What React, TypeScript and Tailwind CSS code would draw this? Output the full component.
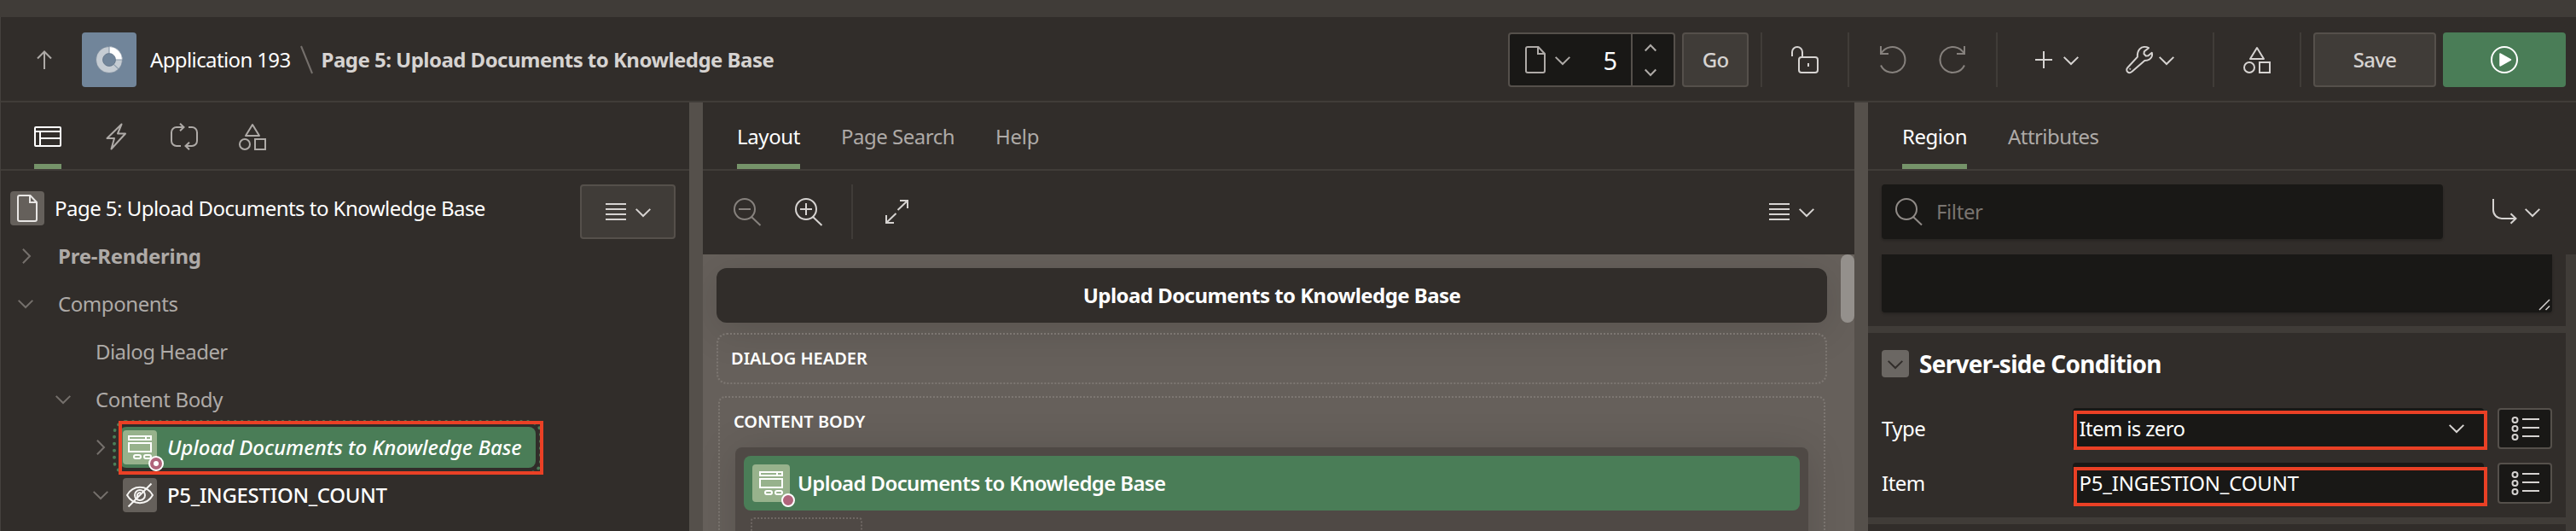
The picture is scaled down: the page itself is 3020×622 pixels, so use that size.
import React from 'react';

type IconProps = { className?: string };

const Svg = ({ w, h, sw = 2, className = '', children }: { w: number; h: number; sw?: number; className?: string; children: React.ReactNode }) => (
  <svg width={w} height={h} viewBox={`0 0 ${w} ${h}`} fill="none" stroke="currentColor" strokeWidth={sw} className={`shrink-0 overflow-visible ${className}`}>
    {children}
  </svg>
);

const ChevronDown = ({ className }: IconProps) => (
  <Svg w={18} h={10} className={className}><path d="M.7.9 9 9 17.300.9" /></Svg>
);
const ChevronRight = ({ className }: IconProps) => (
  <Svg w={10} h={18} className={className}><path d="M.9.7 9 9 .9 17.300" /></Svg>
);
const Doc = ({ className }: IconProps) => (
  <Svg w={24} h={32} className={className}>
    <path d="M3 1h12.500L23 9v20a2 2 0 0 1-2 2H3a2 2 0 0 1-2-2V3a2 2 0 0 1 2-2z" />
    <path d="M15 1v8h8" />
  </Svg>
);
const Shapes = ({ className }: IconProps) => (
  <Svg w={32} h={32} className={className}>
    <path d="M16 2l8 13H8z" strokeLinejoin="round" />
    <circle cx="7" cy="25" r="6" />
    <rect x="19" y="19" width="12" height="12" />
  </Svg>
);
const Menu = ({ className, w = 24 }: IconProps & { w?: number }) => (
  <Svg w={w} h={20} className={className}><path d={`M0 1h${w}M0 7h${w}M0 13h${w}M0 19h${w}`} /></Svg>
);
const ListIcon = () => (
  <Svg w={33} h={28} className="text-[#d6d3d1]">
    <circle cx="4.5" cy="4" r="3" /><circle cx="4.5" cy="14" r="3" /><circle cx="4.5" cy="24" r="3" />
    <path d="M13 3h20M13 13h20M13 23h20" />
  </Svg>
);
const RegionIcon = () => (
  <Svg w={28} h={28} className="text-white">
    <rect x="1" y="1" width="26" height="4" /><path d="M21 1v4" />
    <rect x="1" y="9" width="26" height="10" />
    <rect x="7" y="23" width="8" height="4" rx="2" /><rect x="19" y="23" width="8" height="4" rx="2" />
  </Svg>
);

const Divider = ({ className = '' }: IconProps) => <div className={`h-16 w-0.5 shrink-0 bg-[#403c38] ${className}`} />;

function Header() {
  return (
    <header className="flex h-[100px] shrink-0 items-center border-b-2 border-l border-b-[#403c38] border-l-[#45413d] bg-[#312d2a] pr-3 pt-0.5 text-[#d6d3d1]">
      <Svg w={18} h={22} className="ml-[42px] text-[#aeaaa7]"><path d="M9 22V1.500M1 9.500l8-8 8 8" /></Svg>
      <div className="ml-[35px] flex size-16 items-center justify-center rounded bg-[#71859a]">
        <svg width="32" height="32" viewBox="0 0 32 32" fill="none">
          <circle cx="16" cy="16" r="11.5" stroke="#c5ccd3" strokeWidth="8" />
          <path d="M16 4.500A11.500 11.500 0 0 1 27.500 16" stroke="#fff" strokeWidth="8" />
          <path d="M16 .5V8.500M23.500 16H31.500M21.300 21.300l5.400 5.400" stroke="#8a99a9" strokeWidth="1.2" />
          <circle cx="16" cy="16" r="15.5" stroke="#5f7286" strokeOpacity=".5" />
          <circle cx="16" cy="16" r="7.5" stroke="#5f7286" strokeOpacity=".8" />
        </svg>
      </div>
      <span className="ml-4 tracking-[-0.62px] text-white">Application 193</span>
      <Svg w={15} h={32} className="ml-[11px] text-[#75706c]"><path d="M1 0l13 32" /></Svg>
      <span className="ml-[10px] font-bold tracking-[-0.53px] text-[#d6d3d1]">Page 5: Upload Documents to Knowledge Base</span>

      <div className="ml-auto flex h-16 w-[196px] items-center rounded border-2 border-[#55504b] bg-[#191816] text-[#aeaaa7]">
        <Doc className="ml-[18px]" />
        <ChevronDown className="ml-[11px] mt-0.5" />
        <span className="ml-auto mr-4 text-[29px] text-white">5</span>
        <div className="flex h-full w-[50px] flex-col items-center justify-center gap-[21px] border-l-2 border-[#55504b] pr-1.5">
          <Svg w={14} h={8}><path d="M.7 7.500 7 1l6.300 6.500" /></Svg>
          <Svg w={14} h={8}><path d="M.7.500 7 7l6.300-6.500" /></Svg>
        </div>
      </div>
      <button className="ml-2 h-16 w-[78px] rounded border-2 border-[#55504b] bg-[#403c38] font-medium tracking-[-0.8px]">Go</button>
      <Divider className="ml-3.5" />
      <Svg w={32} h={32} className="ml-[34px]">
        <rect x="9" y="13" width="22" height="18" rx="3" />
        <path d="M1 12V7a6 6 0 0 1 12 0v6M20 20v4" />
      </Svg>
      <Divider className="ml-[34px]" />
      <Svg w={30} h={32} className="ml-9 text-[#86817d]"><path d="M1 0v9h9M1.500 8.500A15 15 0 1 1 1 22.500" /></Svg>
      <Svg w={30} h={32} className="ml-10 text-[#86817d]"><path d="M29 0v9h-9M28.500 8.500A15 15 0 1 0 29 22.500" /></Svg>
      <Divider className="ml-9" />
      <Svg w={20} h={20} className="ml-11"><path d="M10 0v20M0 10h20" /></Svg>
      <ChevronDown className="ml-[13px] mt-0.5" />
      <Svg w={32} h={32} className="ml-[55px]">
        <path d="M27 2.200 21.800 6.300 21.500 9l2.300 2.600 2.700-.4 4.300-3.400c.8 3-.4 6-2.800 7.700-1.700 1.200-3.700 1.600-5.700 1.600L7.300 29.900c-1.500 1.500-3.600 1.600-5 .3s-1.400-3.600 0-5L13.900 12.600c-.3-3.300.4-6.600 2.600-9.200C19.300.5 23.700.2 27 2.200z" strokeLinejoin="round" />
        <circle cx="5.200" cy="26.800" r=".6" strokeWidth="1" />
      </Svg>
      <ChevronDown className="ml-[7px] mt-0.5" />
      <Divider className="ml-[45px]" />
      <Shapes className="ml-[34px]" />
      <Divider className="ml-[34px]" />
      <button className="ml-3.5 h-16 w-36 rounded border-2 border-[#55504b] bg-[#403c38] font-medium tracking-[-0.7px]">Save</button>
      <button className="ml-2 flex h-16 w-36 items-center justify-center rounded bg-[#4a7d57] text-white">
        <Svg w={32} h={32}><circle cx="16" cy="16" r="15" /><path d="M11 9l12.500 7L11 23z" fill="currentColor" strokeWidth="1.5" strokeLinejoin="round" /></Svg>
      </button>
    </header>
  );
}

function TreeRow({ level, open, label, className }: { level: 1 | 2; open?: boolean; label: string; className: string }) {
  return (
    <div className={`flex h-14 items-center ${level === 2 ? 'pl-[51px]' : 'pl-[7px]'}`}>
      <div className="flex w-11 justify-center text-[#75706c]">
        {open === true && <ChevronDown />}
        {open === false && <ChevronRight className="ml-0.5" />}
      </div>
      <span className={`ml-4 text-[#aeaaa7] ${className}`}>{label}</span>
    </div>
  );
}

function LeftPanel() {
  return (
    <aside className="w-[808px] shrink-0 border-l border-[#45413d] bg-[#312d2a]">
      <nav className="flex h-20 items-center gap-12 border-b-2 border-[#403c38] pl-[39px] pt-0.5 text-[#aeaaa7]">
        <div className="relative flex h-full w-8 items-center justify-center text-white">
          <Svg w={32} h={24}><rect x="1" y="1" width="30" height="22" rx="1" /><path d="M1 6h30M7 6v17M7 14h24" /></Svg>
          <div className="absolute bottom-0 left-0 h-1.5 w-8 bg-[#759369]" />
        </div>
        <div className="flex w-8 justify-center">
          <Svg w={24} h={32}><path d="M18.500 1.500 1.500 18h8.500L6.500 30.500 23 12.500h-9z" strokeLinejoin="round" /></Svg>
        </div>
        <Svg w={32} h={32}>
          <path d="M12 27H7a6 6 0 0 1-6-6V11a6 6 0 0 1 6-6h8M11 .7 15.500 5 11 9.300M21 5h4a6 6 0 0 1 6 6v10a6 6 0 0 1-6 6h-8M22 22.700 17.500 27l4.500 4.300" />
        </Svg>
        <Shapes />
      </nav>
      <div className="pt-4">
        <div className="flex h-14 items-center pl-[11px]">
          <div className="flex size-10 items-center justify-center rounded bg-[#65605b] text-[#e8e6e4]"><Doc /></div>
          <span className="ml-3 tracking-[-0.53px] text-white">Page 5: Upload Documents to Knowledge Base</span>
          <button className="ml-auto mr-4 flex h-16 w-28 shrink-0 items-center justify-center gap-[11px] self-start rounded border-2 border-[#55504b] bg-[#403c38] text-[#d6d3d1]">
            <Menu /><ChevronDown className="mt-0.5" />
          </button>
        </div>
        <TreeRow level={1} open={false} label="Pre-Rendering" className="font-bold tracking-[-0.25px]" />
        <TreeRow level={1} open label="Components" className="tracking-[-0.42px]" />
        <TreeRow level={2} label="Dialog Header" className="tracking-[-0.55px]" />
        <TreeRow level={2} open label="Content Body" className="tracking-[-0.38px]" />
        <div className="relative flex h-14 items-center pl-[95px]">
          <div className="flex w-11 justify-center text-[#75706c]"><ChevronRight /></div>
          <div className="flex h-12 w-[488px] items-center rounded-lg bg-[#4a7d57] pl-1 outline-4 outline-offset-4 outline-[#4a7d57] outline-dotted">
            <div className="relative flex size-10 items-center justify-center rounded bg-[#97b28c]">
              <RegionIcon />
              <div className="absolute -bottom-2 -right-2 flex size-[18px] items-center justify-center rounded-full border-2 border-white bg-[#b0647b]">
                <div className="size-1.5 rounded-full bg-white" />
              </div>
            </div>
            <span className="ml-3 whitespace-nowrap font-medium italic tracking-[-0.03px] text-white">Upload Documents to Knowledge Base</span>
          </div>
          <div className="absolute -top-[3px] left-[138px] h-[63px] w-[498px] border-4 border-[#ea4025]" />
        </div>
        <div className="flex h-14 items-center pl-[95px]">
          <div className="flex w-11 justify-center text-[#75706c]"><ChevronDown /></div>
          <div className="ml-1 flex size-10 items-center justify-center rounded bg-[#65605b] text-[#f5f4f2]">
            <Svg w={32} h={28}>
              <path d="M1 14C8 1.800 24 1.800 31 14 24 26.200 8 26.200 1 14z" strokeLinejoin="round" />
              <circle cx="16" cy="14" r="6" /><path d="M13 16.500c-.8-3 .5-5.500 4-5.500M2.500 27.500 29.500.500" />
            </Svg>
          </div>
          <span className="ml-3 font-medium tracking-[-0.3px] text-white">P5_INGESTION_COUNT</span>
        </div>
      </div>
    </aside>
  );
}

function Tabs({ items }: { items: [string, string][] }) {
  return (
    <nav className="flex h-20 shrink-0 gap-12 border-b-2 border-[#403c38] pl-10">
      {items.map(([label, tracking], i) => (
        <div key={label} className={`flex h-full items-center border-b-[6px] pt-2 ${tracking} ${i === 0 ? 'border-[#759369] text-white' : 'border-transparent text-[#aeaaa7]'}`}>{label}</div>
      ))}
    </nav>
  );
}

function Canvas() {
  return (
    <main className="flex w-[1350px] shrink-0 flex-col bg-[#312d2a]">
      <Tabs items={[['Layout', 'tracking-[-0.38px]'], ['Page Search', 'tracking-[-0.5px]'], ['Help', 'tracking-[-0.3px]']]} />
      <div className="flex h-[98px] shrink-0 items-center pb-0.5 pl-9 pr-[47px] text-[#d6d3d1]">
        <Svg w={32} h={32} className="text-[#86817d]"><circle cx="13" cy="13" r="12" /><path d="M6 13h14M21 22l10.500 10" /></Svg>
        <Svg w={32} h={32} className="ml-10"><circle cx="13" cy="13" r="12" /><path d="M6 13h14M13 6v14M21 22l10.500 10" /></Svg>
        <Divider className="ml-[34px]" />
        <Svg w={27} h={28} className="ml-[38px]"><path d="M14.500 12 26 1M17 1h9v9M12.500 16 1 27M1 18v9h9" /></Svg>
        <Menu className="ml-auto" />
        <ChevronDown className="ml-[11px] mt-0.5" />
      </div>
      <div className="relative flex-1 overflow-hidden bg-[#66605b] px-4 pt-4 text-white">
        <div className="flex h-16 w-[1302px] items-center justify-center rounded-xl bg-[#312d2a] font-bold tracking-[-0.55px] shadow-[0_8px_48px_rgba(0,0,0,0.14)]">Upload Documents to Knowledge Base</div>
        <div className="mt-3 flex h-[60px] w-[1302px] items-center rounded-xl border-2 border-dotted border-[#7d7772] pl-[15px] text-[20px] font-semibold">DIALOG HEADER</div>
        <div className="ml-0.5 mt-3.5 h-56 w-[1298px] rounded-lg border-2 border-dotted border-[#7d7772] px-[18px]">
          <div className="-ml-0.5 flex h-[58px] items-center pb-0.5 text-[20px] font-semibold">CONTENT BODY</div>
          <div className="h-44 w-[1258px] rounded-lg bg-[#4f4945] px-2.5 pt-2.5 shadow-[0_4px_48px_rgba(0,0,0,0.14)]">
            <div className="flex h-16 items-center rounded-lg bg-[#4a7d57] pl-2.5">
              <div className="relative flex size-11 items-center justify-center rounded bg-[#97b28c]">
                <RegionIcon />
                <div className="absolute -bottom-1.5 -right-1.5 size-4 rounded-full border-2 border-white bg-[#b0647b]" />
              </div>
              <span className="ml-[9px] font-semibold tracking-[-0.62px]">Upload Documents to Knowledge Base</span>
            </div>
            <div className="ml-2 mt-2 h-16 w-[131px] rounded border-2 border-dotted border-[#6e6763]" />
          </div>
        </div>
        <div className="absolute right-0 top-0 h-20 w-4 rounded-full bg-[#94908c]" />
      </div>
    </main>
  );
}

function PropertyRow({ label, children }: { label: string; children: React.ReactNode }) {
  return (
    <div className="flex h-12 items-center text-white">
      <span className="w-56 tracking-[-0.5px]">{label}</span>
      {children}
      <button className="ml-4 flex h-12 w-16 items-center justify-center rounded border-2 border-[#55504b] bg-[#191816]"><ListIcon /></button>
    </div>
  );
}

function RightPanel() {
  return (
    <aside className="flex min-w-0 flex-1 flex-col bg-[#312d2a]">
      <Tabs items={[['Region', 'tracking-[-0.45px]'], ['Attributes', 'tracking-[-0.58px]']]} />
      <div className="flex h-[98px] shrink-0 items-center pb-0.5 pl-4">
        <div className="flex h-16 w-[658px] items-center rounded bg-[#191816] pl-4 shadow-[0_2px_3px_rgba(0,0,0,0.2)]">
          <Svg w={32} h={32} className="text-[#908b87]"><circle cx="13" cy="13" r="12" /><path d="M21 22l10 9.500" /></Svg>
          <span className="ml-4 tracking-[-0.4px] text-[#797470]">Filter</span>
        </div>
        <Svg w={28} h={30} className="ml-[58px] text-[#d6d3d1]"><path d="M1 0v13a10 10 0 0 0 10 10h16M21.500 17.300l6 5.700-6 5.700" /></Svg>
        <ChevronDown className="ml-[10px] mt-0.5 text-[#d6d3d1]" />
      </div>
      <div className="flex min-h-0 flex-1">
        <div className="w-[818px] overflow-hidden">
          <div className="h-[84px] px-4">
            <div className="flex h-[68px] items-end justify-end rounded-b bg-[#191816] p-0.5 shadow-[0_2px_3px_rgba(0,0,0,0.2)]">
              <Svg w={14} h={14} sw={1.5} className="text-[#d6d3d1]"><path d="M1 13 13 1M8.500 13 13 8.500" /></Svg>
            </div>
          </div>
          <div className="h-2 bg-[#403c38]" />
          <div className="px-4 pb-4 pt-5">
            <div className="flex h-8 items-center">
              <div className="flex size-8 items-center justify-center rounded bg-[#6b6763] text-[#312d2a]"><ChevronDown className="mt-0.5" /></div>
              <h2 className="ml-3 text-[28px] font-bold tracking-[-0.72px] text-white">Server-side Condition</h2>
            </div>
            <div className="mt-9 flex flex-col gap-4">
              <PropertyRow label="Type">
                <div className="relative flex h-12 w-[482px] items-center rounded bg-[#191816] pl-[7.5px] pr-[23px]">
                  <span className="tracking-[-0.65px]">Item is zero</span>
                  <ChevronDown className="ml-auto text-[#d6d3d1]" />
                  <div className="absolute left-px top-[3px] h-[46px] w-[485px] border-4 border-[#ea4025]" />
                </div>
              </PropertyRow>
              <PropertyRow label="Item">
                <div className="relative flex h-12 w-[482px] items-center rounded bg-[#191816] pl-[7.5px]">
                  <span className="tracking-[-0.2px]">P5_INGESTION_COUNT</span>
                  <div className="absolute left-px top-[5px] h-[46px] w-[485px] border-4 border-[#ea4025]" />
                </div>
              </PropertyRow>
            </div>
          </div>
          <div className="h-2 bg-[#403c38]" />
        </div>
        <div className="flex-1 bg-[#403c38]" />
      </div>
    </aside>
  );
}

export default function App() {
  return (
    <div className="flex h-[622px] w-[3020px] flex-col overflow-hidden bg-[#312d2a] font-['Noto_Sans',sans-serif] text-[24px] leading-none">
      <div className="h-5 shrink-0 bg-[#403c38]" />
      <Header />
      <div className="flex min-h-0 flex-1">
        <LeftPanel />
        <div className="w-4 shrink-0 bg-[#55504b]" />
        <Canvas />
        <div className="w-4 shrink-0 bg-[#55504b]" />
        <RightPanel />
      </div>
    </div>
  );
}
